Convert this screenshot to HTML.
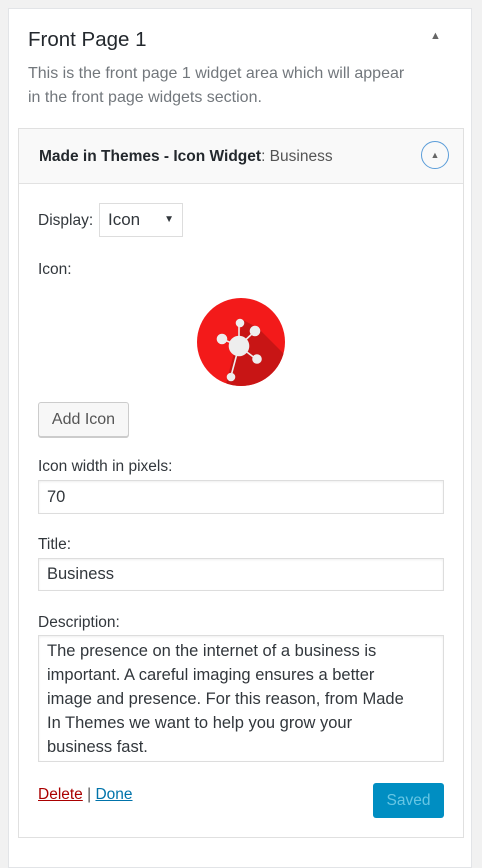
<!DOCTYPE html>
<html><head><meta charset="utf-8">
<style>
html,body{margin:0;padding:0;width:482px;height:851px;overflow:hidden;background:#f1f1f1;font-family:"Liberation Sans",sans-serif;color:#23282d}
.a{position:absolute}
.panel{left:8px;top:8px;width:464px;height:860px;background:#fff;border:1px solid #e2e4e7;box-sizing:border-box}
.w{left:18px;top:128px;width:446px;height:710px;border:1px solid #e0e0e0;box-sizing:border-box;background:#fff}
.wh{left:19px;top:129px;width:444px;height:54px;background:#f9f9f9;border-bottom:1px solid #e2e2e2}
.lbl{font-size:15.5px;color:#32373c}
.inp{border:1px solid #ddd;box-shadow:inset 0 1px 2px rgba(0,0,0,.07);background:#fff;box-sizing:border-box;font-size:16.5px;color:#32373c;padding-left:8px}
</style></head><body>
<div class="a panel"></div>
<div class="a" style="left:28px;top:28px;font-size:20.5px;color:#23282d">Front Page 1</div>
<div class="a" style="left:430px;top:30px;font-size:11px;color:#666">▲</div>
<div class="a" style="left:28px;top:62px;font-size:16px;line-height:24px;color:#72777c">This is the front page 1 widget area which will appear<br>in the front page widgets section.</div>
<div class="a w"></div>
<div class="a wh"></div>
<div class="a" style="left:39px;top:148px;font-size:15.5px;font-weight:bold;color:#23282d;white-space:nowrap">Made in Themes - Icon Widget<span style="font-weight:normal;color:#555">: Business</span></div>
<div class="a" style="left:421px;top:141px;width:28px;height:28px;border:1.5px solid #5b9dd9;border-radius:50%;box-sizing:border-box;text-align:center;font-size:9px;line-height:26px;color:#666">▲</div>
<div class="a lbl" style="left:38px;top:212px">Display:</div>
<div class="a" style="left:99px;top:203px;width:84px;height:34px;border:1px solid #ddd;box-sizing:border-box;font-size:17px;line-height:32px;padding-left:8px;color:#32373c">Icon<span style="position:absolute;right:8px;top:0;font-size:10px">▼</span></div>
<div class="a lbl" style="left:38px;top:261px">Icon:</div>
<svg class="a" style="left:196px;top:298px" width="90" height="90" viewBox="0 0 90 90">
<defs><clipPath id="c"><circle cx="45" cy="44" r="44"/></clipPath></defs>
<circle cx="45" cy="44" r="44" fill="#f31a1a"/>
<polygon clip-path="url(#c)" points="47,22 62,30 104,72 66,104 30,86 34,70" fill="#c81515"/>
<g stroke="#eee" stroke-width="1.6" fill="#eee">
<line x1="43" y1="48" x2="43" y2="26"/><line x1="43" y1="48" x2="26" y2="41"/><line x1="43" y1="48" x2="58" y2="34"/><line x1="43" y1="48" x2="60" y2="61"/><line x1="43" y1="48" x2="35" y2="78"/>
<circle cx="43" cy="48" r="9.5"/><circle cx="44" cy="25" r="3.5"/><circle cx="26" cy="41" r="4.5"/><circle cx="59" cy="33" r="4.5"/><circle cx="61" cy="61" r="4"/><circle cx="35" cy="79" r="3.5"/>
</g></svg>
<div class="a" style="left:38px;top:402px;width:91px;height:35px;border:1px solid #ccc;border-radius:3px;background:#f7f7f7;box-shadow:0 1px 0 #ccc;box-sizing:border-box;text-align:center;line-height:33px;font-size:16px;color:#555">Add Icon</div>
<div class="a lbl" style="left:38px;top:458px">Icon width in pixels:</div>
<div class="a inp" style="left:38px;top:480px;width:406px;height:34px;line-height:32px">70</div>
<div class="a lbl" style="left:38px;top:536px">Title:</div>
<div class="a inp" style="left:38px;top:558px;width:406px;height:33px;line-height:31px">Business</div>
<div class="a lbl" style="left:38px;top:614px">Description:</div>
<div class="a inp" style="left:38px;top:635px;width:406px;height:127px;font-size:16.5px;line-height:24px;padding-top:3px;white-space:nowrap">The presence on the internet of a business is<br>important. A careful imaging ensures a better<br>image and presence. For this reason, from Made<br>In Themes we want to help you grow your<br>business fast.</div>
<div class="a" style="left:38px;top:786px;font-size:15.5px;color:#555"><span style="color:#a00;text-decoration:underline">Delete</span> | <span style="color:#0073aa;text-decoration:underline">Done</span></div>
<div class="a" style="left:373px;top:783px;width:71px;height:35px;background:#008ec2;border-radius:3px;color:#66c6e4;text-align:center;line-height:35px;font-size:15.5px">Saved</div>
</body></html>
